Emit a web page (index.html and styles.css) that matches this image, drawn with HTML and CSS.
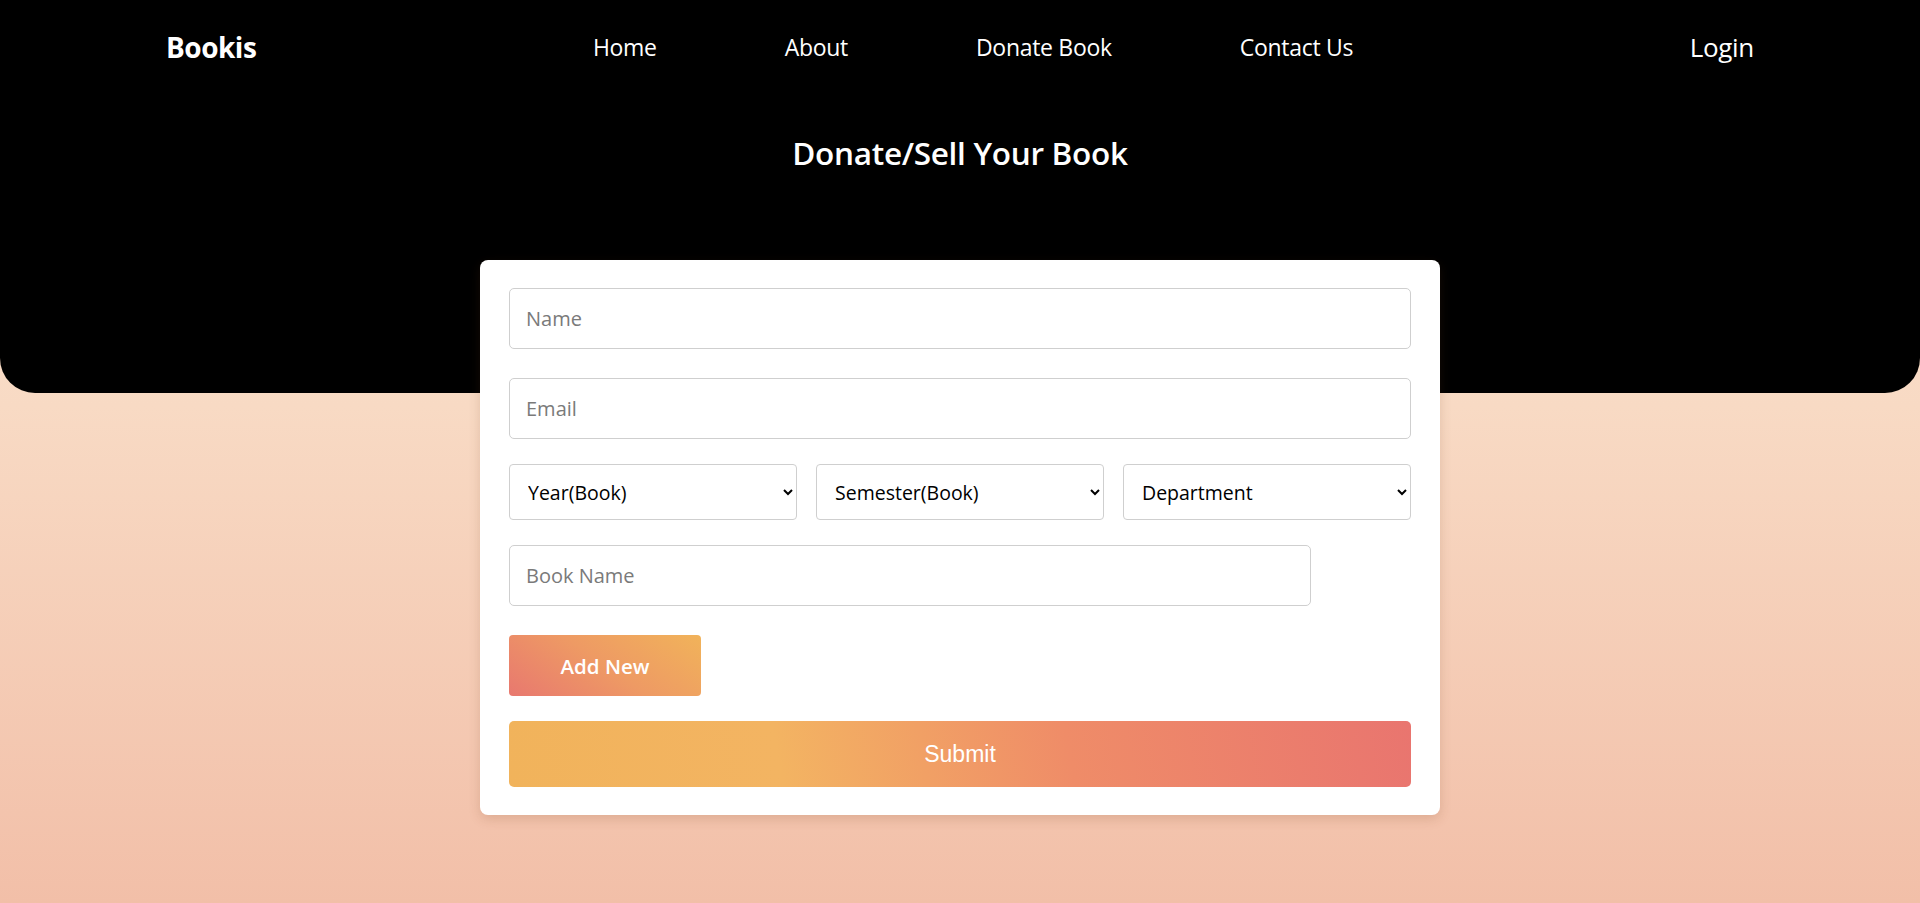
FILE: index.html
```html
<!DOCTYPE html>
<html lang="en">
<head>
<meta charset="utf-8">
<title>Bookis - Donate Book</title>
<link rel="stylesheet" href="styles.css">
</head>
<body>
<header class="hero">
  <nav class="navbar">
    <a class="brand" href="#">Bookis</a>
    <ul class="nav-links">
      <li><a href="#">Home</a></li>
      <li><a href="#">About</a></li>
      <li><a href="#">Donate Book</a></li>
      <li><a href="#">Contact Us</a></li>
    </ul>
    <a class="login" href="#">Login</a>
  </nav>
  <h1 class="title">Donate/Sell Your Book</h1>
</header>
<main class="content">
  <form class="card">
    <input class="field" type="text" placeholder="Name">
    <input class="field gap-lg" type="email" placeholder="Email">
    <div class="select-row">
      <select class="select"><option>Year(Book)</option></select>
      <select class="select"><option>Semester(Book)</option></select>
      <select class="select"><option>Department</option></select>
    </div>
    <input class="field book" type="text" placeholder="Book Name">
    <button class="add-btn" type="button">Add New</button>
    <input class="submit-btn" type="submit" value="Submit">
  </form>
</main>
</body>
</html>
```

FILE: styles.css
```css
* { box-sizing: border-box; }

html, body {
  margin: 0;
  min-height: 100%;
}

body {
  min-height: 903px;
  font-family: "Open Sans", "Noto Sans", sans-serif;
  background: linear-gradient(180deg, #fbe6d4 0%, #f8dac4 45%, #f2bfa8 100%);
}

.hero {
  background: #000;
  height: 393px;
  border-radius: 0 0 35px 35px;
  color: #fff;
}

.navbar {
  height: 93px;
  padding: 0 166px;
  display: flex;
  align-items: center;
  justify-content: space-between;
}

.brand {
  color: #fff;
  text-decoration: none;
  font-weight: 700;
  font-size: 28px;
  letter-spacing: -0.5px;
}

.nav-links {
  list-style: none;
  margin: 0;
  padding: 0;
  display: flex;
  gap: 128px;
}

.nav-links a,
.login {
  color: #fff;
  text-decoration: none;
  font-size: 23px;
  letter-spacing: -0.3px;
}

.login {
  font-size: 26px;
}

.title {
  margin: 38px 0 0;
  text-align: center;
  font-size: 31.5px;
  font-weight: 600;
  letter-spacing: -0.3px;
}

.content {
  display: flex;
  justify-content: center;
  margin-top: -133px;
  padding-bottom: 40px;
}

.card {
  width: 960px;
  background: #fff;
  border-radius: 8px;
  padding: 28px 29px 28px;
  box-shadow: 0 4px 12px rgba(120, 60, 30, 0.18);
  display: flex;
  flex-direction: column;
  align-items: flex-start;
}

.field {
  width: 100%;
  height: 61px;
  border: 1px solid #cfcfcf;
  border-radius: 5px;
  padding: 0 16px;
  font-family: "Open Sans", "Noto Sans", sans-serif;
  font-size: 20px;
  color: #222;
  outline: none;
}

.field::placeholder {
  color: #7a7a7a;
}

.gap-lg { margin-top: 29px; }

.select-row {
  margin-top: 25px;
  width: 100%;
  display: grid;
  grid-template-columns: repeat(3, 1fr);
  gap: 19px;
}

.select {
  height: 56px;
  border: 1px solid #cfcfcf;
  border-radius: 4px;
  background: #fff;
  padding: 0 10px 0 14px;
  font-family: "Open Sans", "Noto Sans", sans-serif;
  font-size: 19.5px;
  color: #000;
}

.book {
  width: 802px;
  margin-top: 25px;
}

.add-btn {
  margin-top: 29px;
  width: 192px;
  height: 61px;
  border: none;
  border-radius: 4px;
  background: linear-gradient(35deg, #e8786f 0%, #ee9a64 50%, #f1b35a 100%);
  color: #fff;
  font-family: "Open Sans", "Noto Sans", sans-serif;
  font-weight: 600;
  font-size: 20.5px;
  cursor: pointer;
}

.submit-btn {
  margin-top: 25px;
  width: 100%;
  height: 66px;
  border: none;
  border-radius: 5px;
  background: linear-gradient(80deg, #f1b35b 0%, #f3b462 30%, #ef8c68 62%, #e9756f 100%);
  color: #fff;
  font-family: "Liberation Sans", Arial, sans-serif;
  font-size: 23px;
  cursor: pointer;
}
```
